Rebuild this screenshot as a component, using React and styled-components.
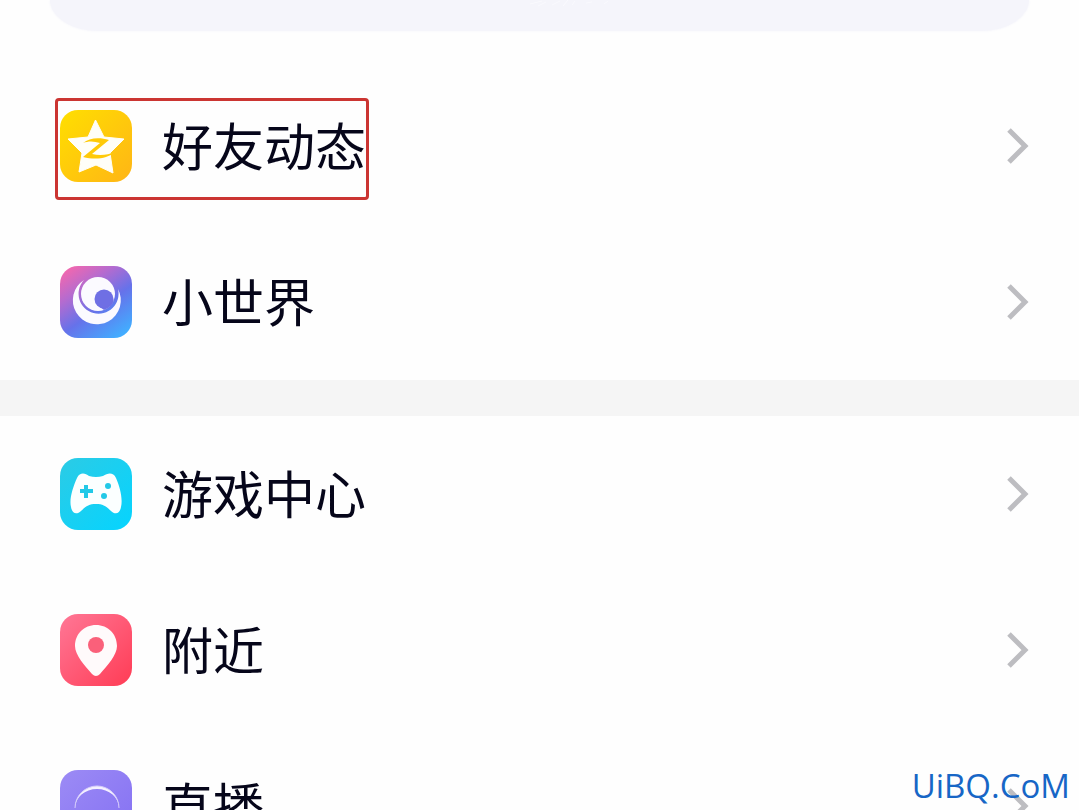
import React from 'react'
import styled, { createGlobalStyle } from 'styled-components'

const GlobalStyle = createGlobalStyle`
    * {
        box-sizing: border-box;
    }

    body {
        margin: 0;
        background: #fefefe;
        font-family: "Noto Sans", "Noto Sans CJK SC", sans-serif;
    }
`

const Page = styled.main`
    position: relative;
    height: 100vh;
    overflow: hidden;
`

const TopCard = styled.div`
    display: flex;
    justify-content: center;
    height: 31px;
    margin: 0 50px 37px;
    padding-left: 60px;
    border-radius: 0 0 48px 48px / 0 0 31px 31px;
    background: #f5f5fb;
    box-shadow: 0 0 3px #f5f5fb;
`

const List = styled.ul`
    margin: 0;
    padding: 0;
    list-style: none;
`

const Divider = styled.hr`
    height: 36px;
    margin: 0;
    border: 0;
    background: #f5f5f5;
`

const RowLink = styled.a`
    display: flex;
    align-items: center;
    justify-content: space-between;
    height: 156px;
    padding: 0 50px 0 60px;
    color: #06061a;
    text-decoration: none;
`

const Entry = styled.span`
    position: relative;
    display: flex;
    align-items: flex-start;
    gap: 30px;

    &::after {
        content: "";
        display: ${props => (props.$marked ? 'block' : 'none')};
        position: absolute;
        inset: -12px -3px -18px -5px;
        border: 3px solid #cb3532;
        border-radius: 4px;
    }
`

const Label = styled.span`
    font-family: "Noto Sans CJK SC", sans-serif;
    font-size: 51px;
    font-weight: 400;
    line-height: 68px;
    white-space: nowrap;
`

const Icon = styled.svg`
    display: block;
    flex: none;
    width: 72px;
    height: 72px;
`

const Arrow = styled.svg`
    display: block;
    flex: none;
    width: 22px;
    height: 36px;
`

const Watermark = styled.span`
    position: absolute;
    right: 9px;
    bottom: 4px;
    color: #1766c6;
    font-family: "Open Sans", sans-serif;
    font-size: 33px;
    line-height: 40px;
`

const Tile = ({ id, from, to, children }) => (
    <Icon viewBox="0 0 72 72" aria-hidden="true">
        <defs>
            <linearGradient id={id} x1="0" y1="0" x2="1" y2="1">
                <stop offset="0" stopColor={from} />
                <stop offset="1" stopColor={to} />
            </linearGradient>
        </defs>
        <rect width="72" height="72" rx="18" fill={`url(#${id})`} />
        {children}
    </Icon>
)

const StarIcon = () => (
    <Tile id="star" from="#ffdf00" to="#ffb516">
        <path
            d="M35.500 10 L44 27 L64 29 L50 43 L53 63 L36 55 L19 62 L22 43 L8 29 L28 27 Z"
            fill="#fffef8"
            stroke="#fffef8"
            strokeWidth="1"
            strokeLinejoin="round"
        />
        <path
            d="M23 33 C29 28 39 27 49 30 L32 44 C40 46 48 45 55 42 C47 49 35 50 23 47 L40 33 C34 31 28 31 23 33 Z"
            fill="#ffca08"
        />
    </Tile>
)

const WorldIcon = () => (
    <Icon viewBox="0 0 72 72" aria-hidden="true">
        <defs>
            <linearGradient id="world" x1="0.1" y1="0" x2="0.8" y2="1">
                <stop offset="0" stopColor="#f767ac" />
                <stop offset="0.3" stopColor="#b56bcf" />
                <stop offset="0.6" stopColor="#6672ea" />
                <stop offset="1" stopColor="#42adff" />
            </linearGradient>
        </defs>
        <rect width="72" height="72" rx="18" fill="url(#world)" />
        <path d="M24 14 A24 24 0 1 0 58 23 A20 20 0 1 1 24 14 Z" fill="#fbfaff" />
        <circle cx="38" cy="28" r="17" fill="#fbfaff" />
        <circle cx="44" cy="33" r="9.500" fill="#6f6fe4" />
        <path d="M55 29 A17 17 0 0 1 44 44 L40 41 C49 43 54 36 55 29 Z" fill="#6f6fe4" />
    </Icon>
)

const GameIcon = () => (
    <Tile id="game" from="#2ccbe5" to="#05d4ff">
        <path
            d="M17 20 C20 14 25 15 29 18 Q36 20 43 18 C48 15 53 14 56 20 C60 29 63 41 61 49 C60 56 55 57 51 53 C46 48 43 46 36 46 C29 46 26 48 21 53 C17 57 12 56 11 49 C9 41 13 29 17 20 Z"
            fill="#fbffff"
        />
        <path d="M26 27 V40 M20 33 H33" stroke="#22c9e7" strokeWidth="4" fill="none" />
        <circle cx="48" cy="28" r="3" fill="#22c9e7" />
        <circle cx="44" cy="38" r="3" fill="#22c9e7" />
    </Tile>
)

const NearbyIcon = () => (
    <Tile id="nearby" from="#ff7796" to="#ff3c55">
        <path
            d="M36 11 C48 11 57 20 57 32 C57 41 47 52 40 60 Q36 64 32 60 C25 52 15 41 15 32 C15 20 24 11 36 11 Z"
            fill="#fffafb"
        />
        <circle cx="36" cy="31" r="8" fill="#fa607a" />
    </Tile>
)

const LiveIcon = () => (
    <Tile id="live" from="#9c8bf5" to="#8470f3">
        <path d="M15 38 A22 22 0 0 1 59 38 A22 19 0 0 0 15 38 Z" fill="#f4f0ff" />
        <path d="M15 38 A22 22 0 0 1 59 38" fill="none" stroke="#d8cffb" strokeWidth="1" />
    </Tile>
)

const Row = ({ icon, label, marked }) => (
    <li>
        <RowLink href="#">
            <Entry $marked={marked}>
                {icon}
                <Label>{label}</Label>
            </Entry>
            <Arrow viewBox="0 0 22 36" aria-hidden="true">
                <path d="M2 2 L18 18 L2 34" fill="none" stroke="#bdbdc1" strokeWidth="5" />
            </Arrow>
        </RowLink>
    </li>
)

const App = () => {
    return (
        <>
            <GlobalStyle />
            <Page>
                <TopCard>
                    <svg width="84" height="8" viewBox="0 0 84 8" aria-hidden="true">
                        <path
                            d="M2 4 L14 1 M10 6 L18 2 M24 5 L32 1 M35 6 L40 0 M44 5 L47 1 M58 3 L64 2 M76 4 L80 1"
                            stroke="#fafafe"
                            strokeWidth="1"
                        />
                    </svg>
                </TopCard>
                <List>
                    <Row icon={<StarIcon />} label="好友动态" marked />
                    <Row icon={<WorldIcon />} label="小世界" />
                </List>
                <Divider />
                <List>
                    <Row icon={<GameIcon />} label="游戏中心" />
                    <Row icon={<NearbyIcon />} label="附近" />
                    <Row icon={<LiveIcon />} label="直播" />
                </List>
                <Watermark>UiBQ.CoM</Watermark>
            </Page>
        </>
    )
}

export default App
